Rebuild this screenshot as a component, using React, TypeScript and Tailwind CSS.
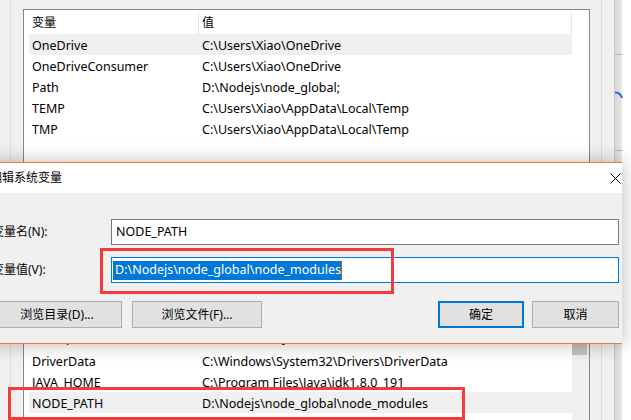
import React from 'react';

const topRows = [
  ['OneDrive', 'C:\\Users\\Xiao\\OneDrive'],
  ['OneDriveConsumer', 'C:\\Users\\Xiao\\OneDrive'],
  ['Path', 'D:\\Nodejs\\node_global;'],
  ['TEMP', 'C:\\Users\\Xiao\\AppData\\Local\\Temp'],
  ['TMP', 'C:\\Users\\Xiao\\AppData\\Local\\Temp'],
];

const bottomRows = [
  ['ComSpec', 'C:\\Windows\\system32\\cmd.exe'],
  ['DriverData', 'C:\\Windows\\System32\\Drivers\\DriverData'],
  ['JAVA_HOME', 'C:\\Program Files\\Java\\jdk1.8.0_191'],
  ['NODE_PATH', 'D:\\Nodejs\\node_global\\node_modules'],
];

function Row({ name, value, active, lifted }: { name: string; value: string; active?: boolean; lifted?: boolean }) {
  return (
    <div
      className={`flex h-[21px] items-center text-[12.5px] ${lifted ? 'pb-[3px]' : 'pt-[3px]'} ${
        active ? 'bg-[#f0f0f0]' : ''
      }`}
    >
      <span className="w-[170px] shrink-0 pl-[3px] whitespace-nowrap">{name}</span>
      <span className="pl-[3px] whitespace-nowrap">{value}</span>
    </div>
  );
}

// window edge peeking out on the right
function RightEdge({ marks }: { marks?: boolean }) {
  return (
    <div className="flex h-full w-[32px] shrink-0">
      <div className="w-[11px] bg-[#f0f0f0]" />
      <div className="w-px bg-[#d9d9d9]" />
      <div className="w-[12px] bg-[#f0f0f0]" />
      <div className="w-px bg-[#c9c9c9]" />
      <div className="relative flex-1 bg-gradient-to-r from-[#d8d8d8] to-[#e9e9e9]">
        {marks && (
          <>
            <div className="absolute left-0 right-0 top-[54px] h-px bg-[#b4b4b4]" />
            <div className="absolute left-0 right-0 top-[150px] h-px bg-[#b4b4b4]" />
            <svg className="absolute left-0 top-[91px]" width="8" height="8" viewBox="0 0 8 8">
              <path d="M0 1.5 Q5 1 7 7" fill="none" stroke="#1a73c8" strokeWidth="2" />
            </svg>
          </>
        )}
      </div>
    </div>
  );
}

function LeftGutter() {
  return (
    <div className="flex h-full w-[23px] shrink-0 bg-[#f0f0f0]">
      <div className="w-[10px]" />
      <div className="w-px bg-[#dcdcdc]" />
    </div>
  );
}

function Button({ label, primary, width }: { label: string; primary?: boolean; width: string }) {
  return (
    <div
      className={`flex h-[27px] items-center justify-center bg-[#e1e1e1] ${width} ${
        primary ? 'border-2 border-[#0078d7]' : 'border border-[#adadad]'
      }`}
    >
      {label}
    </div>
  );
}

export default function App() {
  return (
    <div className="relative h-[420px] w-[631px] overflow-hidden bg-white text-[12px] text-black font-[Noto_Sans,Noto_Sans_CJK_SC,sans-serif]">
      <div className="flex h-full w-[622px] flex-col">
        {/* list behind, top part */}
        <div className="flex h-[162px] shrink-0 bg-[#f0f0f0]">
          <LeftGutter />
          <div className="mt-[9px] flex-1 border border-b-0 border-[#828790] bg-white pl-[5px]">
            <div className="flex h-[24px] items-center pt-[2px]">
              <span className="flex h-full w-[170px] items-center border-r border-[#e5e5e5] pl-[3px]">变量</span>
              <span className="flex h-full w-[373px] items-center border-r border-[#e5e5e5] pl-[3px]">值</span>
            </div>
            <div className="w-[543px]">
              {topRows.map((r, i) => (
                <Row key={r[0]} name={r[0]} value={r[1]} active={i === 0} />
              ))}
            </div>
          </div>
          <RightEdge marks />
        </div>

        {/* edit dialog */}
        <div className="relative z-10 ml-[-20px] flex h-[182px] w-[642px] shrink-0 flex-col border-y border-[#f37a26] bg-[#f0f0f0] shadow-[0_0_18px_rgba(0,0,0,0.28)]">
          <div className="flex h-[30px] shrink-0 items-center justify-between bg-white pl-[10px] pr-[1px]">
            <span>编辑系统变量</span>
            <svg width="11" height="11" viewBox="0 0 11 11">
              <path d="M0.5 0.5 L10.5 10.5 M10.5 0.5 L0.5 10.5" stroke="#000" strokeWidth="1" />
            </svg>
          </div>
          <div className="flex flex-col pl-[12px] pr-[3px] pt-[26px]">
            <div className="flex h-[26px] items-center">
              <span className="w-[119px] shrink-0">变量名(N):</span>
              <div className="flex h-full flex-1 items-center border border-[#7a7a7a] bg-white pl-[4px] text-[12.5px]">NODE_PATH</div>
            </div>
            <div className="mt-[12px] flex h-[26px] items-center">
              <span className="w-[119px] shrink-0">变量值(V):</span>
              <div className="flex h-full flex-1 items-center border border-[#0078d7] bg-white pl-px text-[12.5px]">
                <span className="flex h-[19px] items-center bg-[#0078d7] pl-[2px] text-white">
                  D:\Nodejs\node_global\node_modules
                </span>
                <span className="h-[19px] w-px bg-[#c06a20]" />
              </div>
            </div>
            <div className="mt-[18px] flex items-center">
              <Button label="浏览目录(D)..." width="w-[130px]" />
              <div className="w-[10px]" />
              <Button label="浏览文件(F)..." width="w-[130px]" />
              <div className="flex-1" />
              <Button label="确定" primary width="w-[86px]" />
              <div className="w-[8px]" />
              <Button label="取消" width="w-[87px]" />
            </div>
          </div>
        </div>

        {/* list behind, bottom part */}
        <div className="flex min-h-0 flex-1 bg-[#f0f0f0]">
          <LeftGutter />
          <div className="flex flex-1 overflow-hidden border-x border-[#828790] bg-white pl-[5px]">
            <div className="mt-[-15px] w-[543px] shrink-0">
              {bottomRows.map((r, i) => (
                <Row key={r[0]} name={r[0]} value={r[1]} active={i === 3} lifted={i === 0} />
              ))}
            </div>
            <div className="ml-auto w-[17px] shrink-0 bg-[#f0f0f0]">
              <div className="h-[11px] w-[15px] bg-[#c2c2c2]" />
            </div>
          </div>
          <RightEdge />
        </div>
      </div>

      {/* red annotation boxes */}
      <div className="absolute left-[100px] top-[248px] z-20 h-[46px] w-[294px] border-[3px] border-[#f33b3b]" />
      <div className="absolute left-[8px] top-[387px] z-20 h-[33px] w-[457px] border-[3px] border-[#f33b3b]" />
    </div>
  );
}
